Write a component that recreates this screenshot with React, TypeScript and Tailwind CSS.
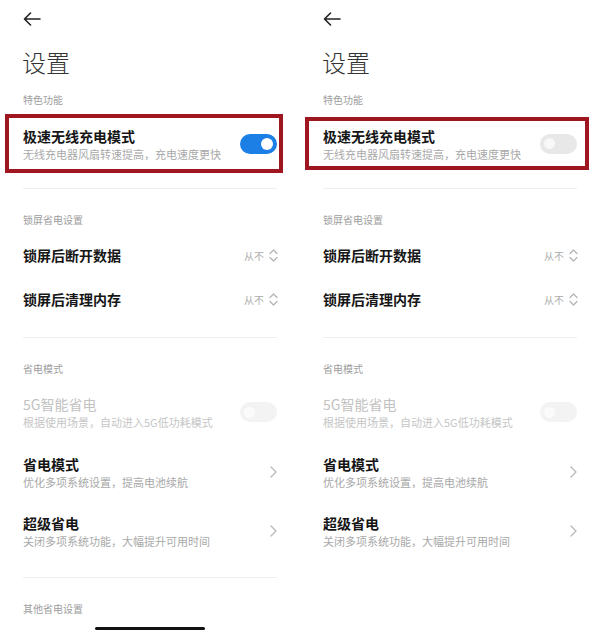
import React from 'react';

const font = { fontFamily: '"Noto Sans CJK SC", "Noto Sans", sans-serif' };

function BackArrow() {
  return (
    <svg width="18" height="14" viewBox="0 0 18 14" fill="none" stroke="#222" strokeWidth="1.6" strokeLinecap="round" strokeLinejoin="round">
      <path d="M17 7H1.5M7.5 1L1.5 7l6 6" />
    </svg>
  );
}

function UpDown() {
  return (
    <svg width="9" height="13" viewBox="0 0 9 13" fill="none" stroke="#b5b5b5" strokeWidth="1.3" strokeLinecap="round" strokeLinejoin="round">
      <path d="M1 4.5L4.5 1 8 4.5M1 8.5L4.5 12 8 8.5" />
    </svg>
  );
}

function Chevron() {
  return (
    <svg width="7" height="12" viewBox="0 0 7 12" fill="none" stroke="#b8b8b8" strokeWidth="1.3" strokeLinecap="round" strokeLinejoin="round">
      <path d="M1 1l5 5-5 5" />
    </svg>
  );
}

function Toggle({ state }: { state: 'on' | 'off' | 'disabled' }) {
  if (state === 'on') {
    return (
      <div className="w-[37px] h-[20px] rounded-full bg-[#1b7fe6] flex items-center justify-end pr-[4px]">
        <div className="w-[12px] h-[12px] rounded-full bg-white" />
      </div>
    );
  }
  if (state === 'off') {
    return (
      <div className="w-[37px] h-[20px] rounded-full bg-[#e8e8e8] flex items-center pl-[4px]">
        <div className="w-[11px] h-[11px] rounded-full bg-[#f8f8f8]" />
      </div>
    );
  }
  return (
    <div className="w-[37px] h-[20px] rounded-full bg-[#f3f3f3] flex items-center pl-[4px]">
      <div className="w-[11px] h-[11px] rounded-full bg-[#fbfbfb]" />
    </div>
  );
}

function TwoLine({ title, sub, disabled }: { title: string; sub: string; disabled?: boolean }) {
  return (
    <div className="flex flex-col">
      <span className={`text-[14px] leading-[20px] ${disabled ? 'font-normal text-[#c2c2c2]' : 'font-bold text-[#161616]'}`}>{title}</span>
      <span className={`text-[11px] leading-[16px] ${disabled ? 'text-[#c6c6c6]' : 'text-[#a9a9a9]'}`}>{sub}</span>
    </div>
  );
}

function Label({ text }: { text: string }) {
  return (
    <div className="h-[44px] pt-[16px] pl-[23px] flex items-center">
      <span className="text-[10px] leading-[15px] text-[#9d9d9d]">{text}</span>
    </div>
  );
}

function Divider() {
  return <div className="mx-[23px] h-px bg-[#eeeeee]" />;
}

function SelectRow({ title }: { title: string }) {
  return (
    <div className="h-[44px] pl-[23px] pr-[22px] flex items-center justify-between">
      <span className="text-[14px] font-bold text-[#161616]">{title}</span>
      <div className="flex items-center gap-[5px]">
        <span className="text-[10px] text-[#ababab]">从不</span>
        <UpDown />
      </div>
    </div>
  );
}

function Phone({ on, full }: { on: boolean; full: boolean }) {
  return (
    <div className="w-[300px] h-[635px] overflow-hidden bg-white flex flex-col" style={font}>
      <div className="h-[38px] pl-[23px] flex items-center">
        <BackArrow />
      </div>
      <div className="h-[48px] pl-[22px] flex items-center">
        <span className="text-[24px] leading-none text-[#333333] font-light">设置</span>
      </div>
      <div className="h-[26px] pl-[23px] flex items-center">
        <span className="text-[10px] leading-[15px] text-[#9d9d9d]">特色功能</span>
      </div>

      <div className="h-[76px]">
        <div
          className={`ml-[5px] border-[4px] border-[#a01620] flex items-center justify-between pl-[14px] ${
            on ? 'w-[278px] h-[59px] mt-[2px] pr-[2px]' : 'w-[284px] h-[53px] mt-[5px] pr-[8px]'
          }`}
        >
          <TwoLine title="极速无线充电模式" sub="无线充电器风扇转速提高，充电速度更快" />
          <Toggle state={on ? 'on' : 'off'} />
        </div>
      </div>

      <Divider />
      <Label text="锁屏省电设置" />
      <SelectRow title="锁屏后断开数据" />
      <SelectRow title="锁屏后清理内存" />
      <div className="mt-[16px]">
        <Divider />
      </div>
      <Label text="省电模式" />

      <div className="h-[60px] pl-[23px] pr-[23px] flex items-center justify-between">
        <TwoLine title="5G智能省电" sub="根据使用场景，自动进入5G低功耗模式" disabled />
        <Toggle state="disabled" />
      </div>
      <div className="h-[60px] pl-[23px] pr-[23px] flex items-center justify-between">
        <TwoLine title="省电模式" sub="优化多项系统设置，提高电池续航" />
        <Chevron />
      </div>
      <div className="h-[58px] pl-[23px] pr-[23px] flex items-center justify-between">
        <TwoLine title="超级省电" sub="关闭多项系统功能，大幅提升可用时间" />
        <Chevron />
      </div>

      {full && (
        <>
          <div className="mt-[17px]">
            <Divider />
          </div>
          <Label text="其他省电设置" />
          <div className="mt-[5px] mx-auto w-[110px] h-[3px] rounded-full bg-[#111111]" />
        </>
      )}
    </div>
  );
}

export default function App() {
  return (
    <div className="w-[600px] h-[635px] flex bg-white">
      <Phone on full />
      <Phone on={false} full={false} />
    </div>
  );
}
